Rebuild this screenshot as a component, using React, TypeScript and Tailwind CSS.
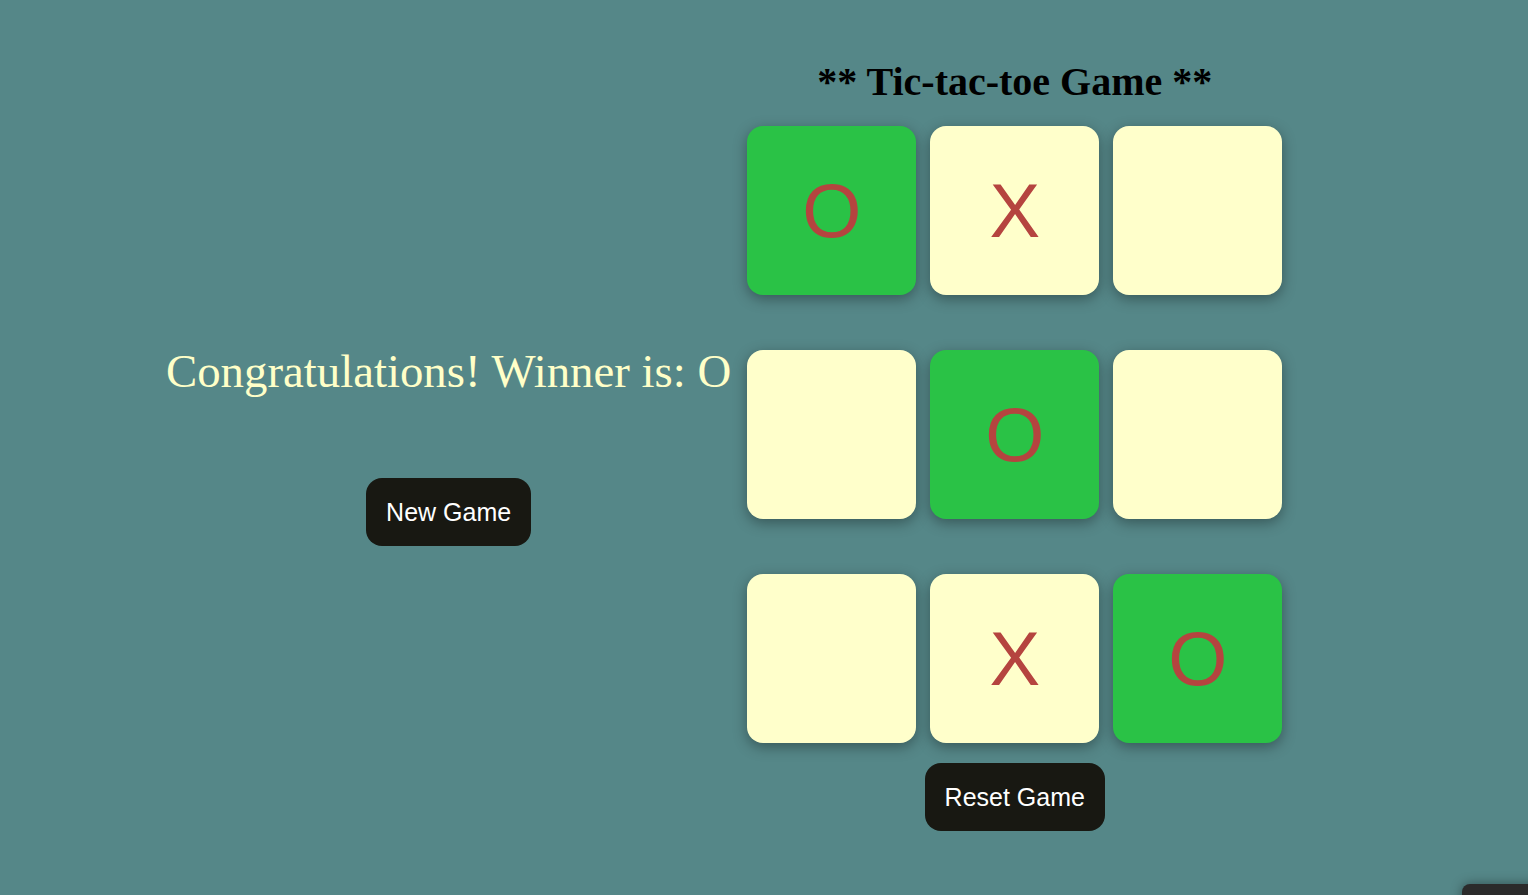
import { useState } from 'react';

type Cell = 'X' | 'O' | '';

const LINES = [
  [0, 1, 2], [3, 4, 5], [6, 7, 8],
  [0, 3, 6], [1, 4, 7], [2, 5, 8],
  [0, 4, 8], [2, 4, 6],
];

const START: Cell[] = ['O', 'X', '', '', 'O', '', '', 'X', 'O'];

function findWinner(board: Cell[]) {
  for (const line of LINES) {
    const [a, b, c] = line;
    if (board[a] && board[a] === board[b] && board[a] === board[c]) {
      return { player: board[a], line };
    }
  }
  return null;
}

export default function App() {
  const [board, setBoard] = useState<Cell[]>(START);
  const [turn, setTurn] = useState<Cell>('X');

  const win = findWinner(board);

  const play = (i: number) => {
    if (board[i] || win) return;
    const next = [...board];
    next[i] = turn;
    setBoard(next);
    setTurn(turn === 'X' ? 'O' : 'X');
  };

  const reset = () => {
    setBoard(Array(9).fill('') as Cell[]);
    setTurn('X');
  };

  return (
    <div className="h-screen overflow-hidden bg-[#558788] flex items-start pl-[166px] pt-[59px]">
      {/* 勝者メッセージ */}
      <div className="flex flex-col items-center mt-[286px] mr-[16px]">
        <p className="text-[46.8px] leading-[1.15] text-[#ffffc8] whitespace-nowrap" style={{ fontFamily: '"Liberation Serif", "Times New Roman", serif' }}>
          {win ? `Congratulations! Winner is: ${win.player}` : `Turn: ${turn}`}
        </p>
        <button
          onClick={reset}
          className="mt-[79px] bg-[#181812] text-white text-[25px] leading-[28px] px-5 py-5 rounded-2xl"
          style={{ fontFamily: '"Liberation Sans", Arial, sans-serif' }}
        >
          New Game
        </button>
      </div>

      {/* 盤面 */}
      <div className="flex flex-col items-center">
        <h1 className="text-[40px] leading-[46px] font-bold text-black whitespace-nowrap" style={{ fontFamily: '"Liberation Serif", "Times New Roman", serif' }}>
          ** Tic-tac-toe Game **
        </h1>
        <div className="mt-[21px] grid grid-cols-[repeat(3,169px)] gap-x-[14px] gap-y-[55px]">
          {board.map((cell, i) => {
            const winning = win?.line.includes(i);
            return (
              <button
                key={i}
                onClick={() => play(i)}
                className={`w-[169px] h-[169px] rounded-2xl flex items-center justify-center text-[76px] text-[#b5443f] shadow-[0_4px_14px_rgba(0,0,0,0.35)] ${winning ? 'bg-[#2ac246]' : 'bg-[#ffffcb]'}`}
                style={{ fontFamily: '"Liberation Sans", Arial, sans-serif' }}
              >
                {cell}
              </button>
            );
          })}
        </div>
        <button
          onClick={reset}
          className="mt-[20px] bg-[#181812] text-white text-[25px] leading-[28px] px-5 py-5 rounded-2xl"
          style={{ fontFamily: '"Liberation Sans", Arial, sans-serif' }}
        >
          Reset Game
        </button>
      </div>

      <div className="fixed left-[1462px] top-[884px] w-[100px] h-[40px] rounded-lg bg-[#2b2b2b] shadow-[0_0_12px_rgba(0,0,0,0.4)]" />
    </div>
  );
}
